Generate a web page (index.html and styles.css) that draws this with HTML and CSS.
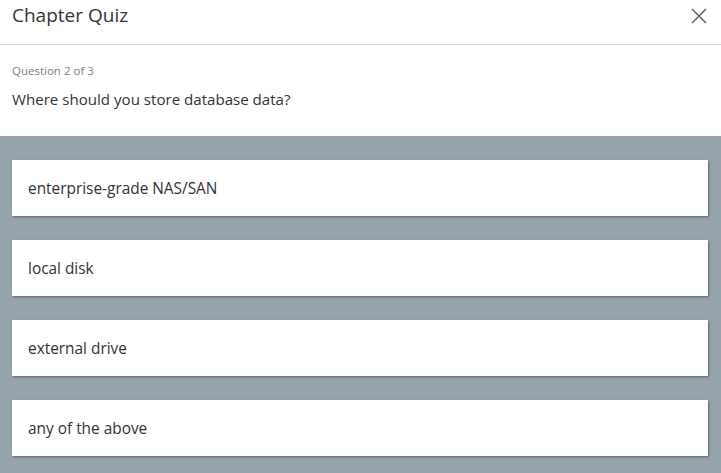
FILE: index.html
```html
<!DOCTYPE html>
<html>
<head>
<meta charset="utf-8">
<link rel="stylesheet" href="styles.css">
</head>
<body>
<div class="modal">
  <header class="head">
    <h1 class="title">Chapter Quiz</h1>
    <button class="close" aria-label="Close">
      <svg width="16" height="16" viewBox="0 0 16 16"><path d="M1 1L15 15M15 1L1 15" stroke="#666" stroke-width="1.6" fill="none"/></svg>
    </button>
  </header>
  <section class="question">
    <div class="count">Question 2 of 3</div>
    <div class="text">Where should you store database data?</div>
  </section>
  <section class="answers">
    <div class="answer">enterprise-grade NAS/SAN</div>
    <div class="answer">local disk</div>
    <div class="answer">external drive</div>
    <div class="answer">any of the above</div>
  </section>
</div>
</body>
</html>
```
FILE: styles.css
```css
html, body { margin: 0; padding: 0; }
body {
  font-family: "Open Sans", "Noto Sans", sans-serif;
  color: #333;
  background: #fff;
  width: 721px;
  height: 473px;
  overflow: hidden;
}
.modal { display: flex; flex-direction: column; height: 473px; }
.head {
  height: 44px;
  border-bottom: 1px solid #dcdcdc;
  display: flex;
  align-items: center;
  justify-content: space-between;
  padding: 0 14px 0 12px;
  box-sizing: content-box;
}
.title { margin: 0; font-size: 19px; font-weight: 400; color: #333; line-height: 30px; position: relative; top: -7px; }
.close { border: 0; background: none; padding: 0; width: 16px; height: 16px; display: flex; position: relative; top: -6px; }
.question { padding: 18px 12px 0 12px; height: 73px; }
.count { font-size: 11.5px; color: #808080; line-height: 16px; }
.text { font-size: 15.1px; color: #333; line-height: 20px; margin-top: 10px; }
.answers {
  flex: 1;
  background: #95a3ad;
  padding: 24px 13px 0 12px;
  display: flex;
  flex-direction: column;
  gap: 24px;
}
.answer {
  background: #fff;
  height: 56px;
  box-sizing: border-box;
  display: flex;
  align-items: center;
  padding: 0 16px;
  font-size: 15.4px;
  color: #333;
  box-shadow: 1px 1px 2px rgba(40, 50, 60, 0.55);
}
```
